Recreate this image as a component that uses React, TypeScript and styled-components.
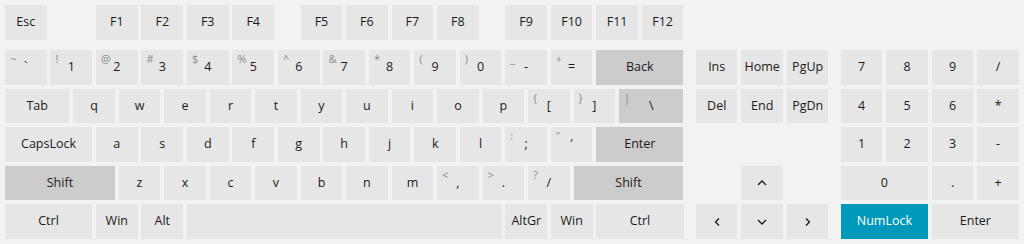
import React from 'react';
import styled, { createGlobalStyle, css } from 'styled-components';

const UNIT = 45.5;
const GAP = 3.9;
const ROW_H = 34.7;

type Tone = 'plain' | 'dark' | 'accent';
type Arrow = 'up' | 'down' | 'left' | 'right';

interface KeyDef {
  label?: string;
  shift?: string;
  u?: number;
  tone?: Tone;
  arrow?: Arrow;
  blank?: boolean;
}

const k = (label: string, u = 1, tone: Tone = 'plain'): KeyDef => ({ label, u, tone });
const s = (shift: string, label: string): KeyDef => ({ shift, label });
const gap = (u: number): KeyDef => ({ blank: true, u });
const arrow = (a: Arrow): KeyDef => ({ arrow: a });

const functionRow: KeyDef[] = [
  k('Esc'),
  gap(1),
  k('F1'), k('F2'), k('F3'), k('F4'),
  gap(0.5),
  k('F5'), k('F6'), k('F7'), k('F8'),
  gap(0.5),
  k('F9'), k('F10'), k('F11'), k('F12'),
];

const mainRows: KeyDef[][] = [
  [
    s('~', '`'), s('!', '1'), s('@', '2'), s('#', '3'), s('$', '4'), s('%', '5'),
    s('^', '6'), s('&', '7'), s('*', '8'), s('(', '9'), s(')', '0'), s('_', '-'),
    s('+', '='), k('Back', 2, 'dark'),
  ],
  [
    k('Tab', 1.5),
    ...'qwertyuiop'.split('').map((c) => k(c)),
    s('{', '['), s('}', ']'),
    { shift: '|', label: '\\', u: 1.5, tone: 'dark' },
  ],
  [
    k('CapsLock', 2),
    ...'asdfghjkl'.split('').map((c) => k(c)),
    s(':', ';'), s('"', "'"),
    k('Enter', 2, 'dark'),
  ],
  [
    k('Shift', 2.5, 'dark'),
    ...'zxcvbnm'.split('').map((c) => k(c)),
    s('<', ','), s('>', '.'), s('?', '/'),
    k('Shift', 2.5, 'dark'),
  ],
  [
    k('Ctrl', 2), k('Win'), k('Alt'), k('', 7), k('AltGr'), k('Win'), k('Ctrl', 2),
  ],
];

const navRows: KeyDef[][] = [
  [k('Ins'), k('Home'), k('PgUp')],
  [k('Del'), k('End'), k('PgDn')],
  [],
  [gap(1), arrow('up'), gap(1)],
  [arrow('left'), arrow('down'), arrow('right')],
];

const numRows: KeyDef[][] = [
  [k('7'), k('8'), k('9'), k('/')],
  [k('4'), k('5'), k('6'), k('*')],
  [k('1'), k('2'), k('3'), k('-')],
  [k('0', 2), k('.'), k('+')],
  [k('NumLock', 2, 'accent'), k('Enter', 2)],
];

const GlobalStyle = createGlobalStyle`
  html, body {
    margin: 0;
    background: #f2f2f2;
  }
  body {
    font-family: "Open Sans", "Noto Sans", sans-serif;
  }
`;

const Keyboard = styled.div`
  display: flex;
  gap: 12.4px;
  padding: 5px;
  width: 1024px;
  height: 244px;
  box-sizing: border-box;
  background: #f2f2f2;
`;

const Section = styled.div<{ $offset?: boolean }>`
  display: flex;
  flex-direction: column;
  gap: ${GAP}px;
  ${(p) => p.$offset && css`padding-top: 45px;`}
`;

const Row = styled.div<{ $h?: number }>`
  display: flex;
  gap: ${GAP}px;
  height: ${(p) => p.$h ?? ROW_H}px;
`;

const FunctionRow = styled(Row)`
  margin-bottom: ${10 - GAP}px;
`;

const tones = {
  plain: css`
    background: #e6e6e6;
    color: #1b1b1b;
  `,
  dark: css`
    background: #cccccc;
    color: #1b1b1b;
  `,
  accent: css`
    background: #0099bc;
    color: #ffffff;
  `,
};

const KeyCap = styled.div<{ $u: number; $tone: Tone }>`
  width: ${(p) => p.$u * UNIT - GAP}px;
  flex: none;
  display: grid;
  place-items: center;
  font-size: 12.5px;
  line-height: 1;
  ${(p) => tones[p.$tone]}
`;

const Blank = styled.div<{ $u: number }>`
  width: ${(p) => p.$u * UNIT - GAP}px;
  flex: none;
`;

const Legend = styled.span`
  grid-area: 1 / 1;
`;

const ShiftLegend = styled.span`
  grid-area: 1 / 1;
  align-self: start;
  justify-self: start;
  margin: 3px 0 0 5px;
  font-size: 11px;
  line-height: 1;
  color: #8a8a8a;
`;

const Chevron = styled.svg`
  grid-area: 1 / 1;
  width: 10px;
  height: 10px;
`;

const arrowPoints: Record<Arrow, string> = {
  up: '1,7 5,3 9,7',
  down: '1,3 5,7 9,3',
  left: '7,1.5 3.5,5 7,8.5',
  right: '3,1.5 6.5,5 3,8.5',
};

const Key: React.FC<{ def: KeyDef }> = ({ def }) => {
  const u = def.u ?? 1;
  if (def.blank) return <Blank $u={u} />;
  return (
    <KeyCap $u={u} $tone={def.tone ?? 'plain'}>
      {def.shift && <ShiftLegend>{def.shift}</ShiftLegend>}
      {def.arrow ? (
        <Chevron viewBox="0 0 10 10">
          <polyline
            points={arrowPoints[def.arrow]}
            fill="none"
            stroke="currentColor"
            strokeWidth="1.3"
          />
        </Chevron>
      ) : (
        <Legend>{def.label}</Legend>
      )}
    </KeyCap>
  );
};

const KeyRow: React.FC<{ keys: KeyDef[] }> = ({ keys }) => (
  <Row>
    {keys.map((def, i) => (
      <Key key={i} def={def} />
    ))}
  </Row>
);

export default function App() {
  return (
    <>
      <GlobalStyle />
      <Keyboard>
        <Section>
          <FunctionRow $h={35}>
            {functionRow.map((def, i) => (
              <Key key={i} def={def} />
            ))}
          </FunctionRow>
          {mainRows.map((keys, i) => (
            <KeyRow key={i} keys={keys} />
          ))}
        </Section>
        <Section $offset>
          {navRows.map((keys, i) => (
            <KeyRow key={i} keys={keys} />
          ))}
        </Section>
        <Section $offset>
          {numRows.map((keys, i) => (
            <KeyRow key={i} keys={keys} />
          ))}
        </Section>
      </Keyboard>
    </>
  );
}
